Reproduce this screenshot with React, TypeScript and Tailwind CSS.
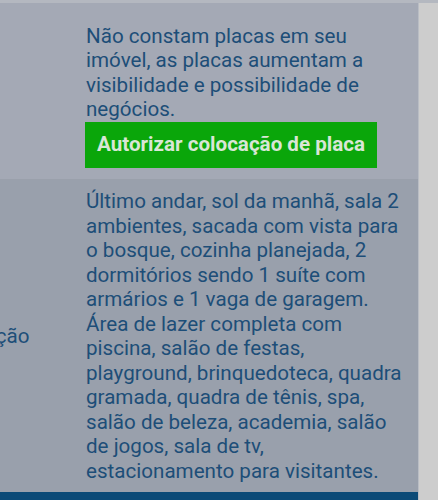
const PLACA_LINES = [
  "Não constam placas em seu",
  "imóvel, as placas aumentam a",
  "visibilidade e possibilidade de",
  "negócios.",
];

const DESC_LINES = [
  "Último andar, sol da manhã, sala 2",
  "ambientes, sacada com vista para",
  "o bosque, cozinha planejada, 2",
  "dormitórios sendo 1 suíte com",
  "armários e 1 vaga de garagem.",
  "Área de lazer completa com",
  "piscina, salão de festas,",
  "playground, brinquedoteca, quadra",
  "gramada, quadra de tênis, spa,",
  "salão de beleza, academia, salão",
  "de jogos, sala de tv,",
  "estacionamento para visitantes.",
];

export default function App() {
  return (
    <div className="relative h-[500px] w-[438px] overflow-hidden bg-[#cdcdcd] font-['Roboto',sans-serif]">
      <div className="h-[3px] w-full bg-[#b4b8c0]" />
      <div className="w-[419px] border-r border-[#b9bdc4]">
        {/* placa row */}
        <div className="flex h-[176px] bg-[#a4a9b5]">
          <div className="w-[86px] shrink-0" />
          <div className="flex-1 pt-[20.5px]">
            <p className="whitespace-nowrap text-[20.6px] leading-[24.5px] text-[#1d4e78]">
              {PLACA_LINES.map((l) => (
                <span key={l} className="block">{l}</span>
              ))}
            </p>
            <button className="-ml-px flex h-[46px] w-[292px] items-center justify-center bg-[#0aa60a] text-[20.6px] font-bold text-[#d9e6d6]">
              Autorizar colocação de placa
            </button>
          </div>
        </div>
        {/* descrição row */}
        <div className="flex h-[313px] border-t border-[#9aa0ab] bg-[#99a0ac]">
          <div className="flex w-[86px] shrink-0 items-center overflow-hidden">
            <span className="ml-[-62px] whitespace-nowrap text-[20.6px] leading-[24.5px] text-[#1d4e78]">Descrição</span>
          </div>
          <div className="flex-1 pt-[9px]">
            <p className="whitespace-nowrap text-[20.6px] leading-[24.5px] text-[#1d4e78]">
              {DESC_LINES.map((l) => (
                <span key={l} className="block">{l}</span>
              ))}
            </p>
          </div>
        </div>
        <div className="h-[8px] bg-[#0b4a77]" />
      </div>
    </div>
  );
}
